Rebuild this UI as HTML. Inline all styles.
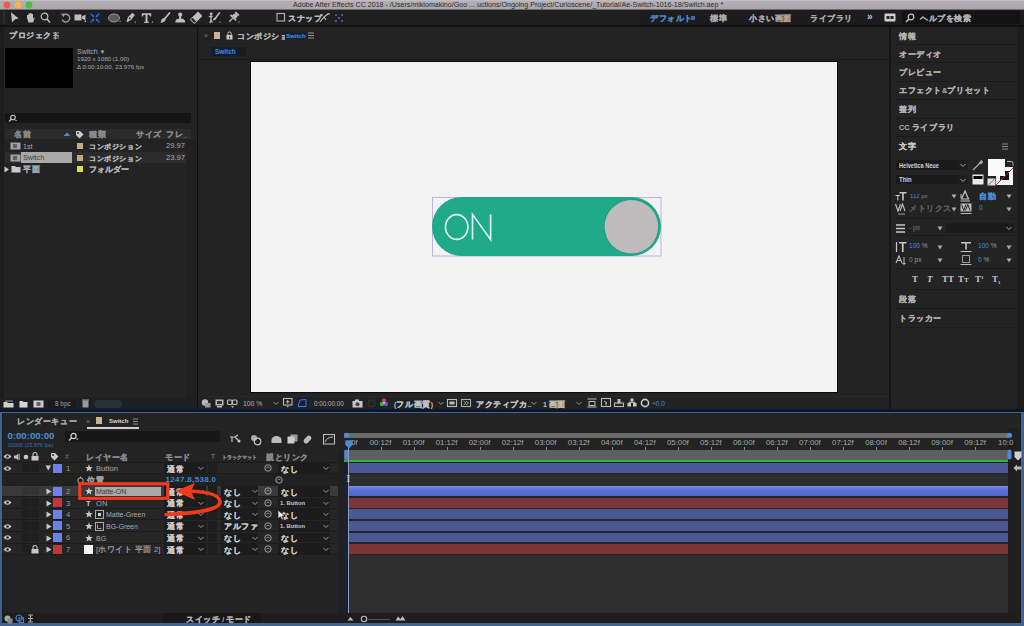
<!DOCTYPE html><html><head><meta charset="utf-8"><style>
html,body{margin:0;padding:0;width:1024px;height:626px;overflow:hidden;background:#101010;}
.a{position:absolute;}
.t{font-family:"Liberation Sans",sans-serif;white-space:nowrap;}
svg{overflow:visible}
</style></head><body>
<div class="a" style="left:0px;top:0px;width:1024px;height:10px;background:linear-gradient(#c9c4c9,#b3aeb3 15%,#aba6ab);"></div>
<div class="a" style="left:0px;top:9.3px;width:1024px;height:0.7px;background:#6d6a6d;"></div>
<svg class="a" style="left:3px;top:1px;" width="8" height="8" viewBox="0 0 8 8"><circle cx="4" cy="4" r="3.4" fill="#ec5b55"/></svg>
<svg class="a" style="left:14px;top:1px;" width="8" height="8" viewBox="0 0 8 8"><circle cx="4" cy="4" r="3.4" fill="#f4b73f"/></svg>
<svg class="a" style="left:25px;top:1px;" width="8" height="8" viewBox="0 0 8 8"><circle cx="4" cy="4" r="3.4" fill="#45c13f"/></svg>
<div class="a t" style="left:293px;top:0.00px;line-height:10px;font-size:7.1px;color:#2f2d30;">Adobe After Effects CC 2018 - /Users/mikiomakino/Goo ... uctions/Ongoing Project/Curioscene/_Tutorial/Ae-Switch-1016-18/Switch.aep *</div>
<div class="a" style="left:0px;top:10px;width:1024px;height:15px;background:#1f1f1f;"></div>
<div class="a" style="left:640px;top:10px;width:384px;height:15px;background:#1c1c1c;"></div>
<div class="a" style="left:0px;top:25px;width:1024px;height:2px;background:#111;"></div>
<div class="a" style="left:3px;top:11px;width:2px;height:13px;background:#2c2c2c;"></div>
<svg class="a" style="left:10px;top:12px;" width="11" height="12" viewBox="0 0 11 12"><path d="M1 0.3 L8.8 6.6 L5.2 7.2 L2 10.6 Z" fill="#bdbdbd"/></svg>
<svg class="a" style="left:25px;top:12px;" width="10" height="12" viewBox="0 0 10 12"><path d="M2 6 L2 3 L3.5 3 L3.5 5 L3.5 1.5 L5 1.5 L5 5 L5 1 L6.5 1 L6.5 5 L6.5 2 L8 2 L8 7 L9 5.5 L9.8 6 L8 10.5 L3.5 10.5 Z" fill="#bdbdbd"/></svg>
<svg class="a" style="left:40px;top:12px;" width="11" height="12" viewBox="0 0 11 12"><circle cx="4.5" cy="4.5" r="3.3" fill="none" stroke="#bdbdbd" stroke-width="1.2"/><path d="M7 7 L10 10.5" stroke="#bdbdbd" stroke-width="1.5"/></svg>
<svg class="a" style="left:60px;top:12px;" width="11" height="12" viewBox="0 0 11 12"><path d="M3.2 3.2 A3.9 3.9 0 1 1 2.2 7.5" fill="none" stroke="#9a9a9a" stroke-width="1.4"/><path d="M0.8 1.8 L4.8 1.6 L3.6 5.2 Z" fill="#9a9a9a"/></svg>
<svg class="a" style="left:74px;top:12px;" width="13" height="12" viewBox="0 0 13 12"><rect x="0.5" y="2.5" width="7" height="6" fill="#bdbdbd"/><path d="M8 4.5 L11.5 2.5 L11.5 8.5 L8 6.5Z" fill="#bdbdbd"/><path d="M10 10 L12 10 L12 8Z" fill="#bdbdbd"/></svg>
<div class="a" style="left:89px;top:12px;width:12px;height:12px;background:#15233d;border-radius:2px;"></div>
<svg class="a" style="left:89px;top:12px;" width="12" height="12" viewBox="0 0 12 12"><path d="M1.5 1.5 L4.5 4.5 M10.5 1.5 L7.5 4.5 M1.5 10.5 L4.5 7.5 M10.5 10.5 L7.5 7.5" stroke="#36609f" stroke-width="1.2"/><path d="M3.8 3 L5 5 L3 3.8Z M8.2 3 L7 5 L9 3.8Z M3.8 9 L5 7 L3 8.2Z M8.2 9 L7 7 L9 8.2Z" fill="#4272b8" stroke="#4272b8" stroke-width="0.8"/></svg>
<svg class="a" style="left:108px;top:12px;" width="13" height="12" viewBox="0 0 13 12"><ellipse cx="6" cy="6" rx="5.5" ry="4" fill="#5a5a5a" stroke="#9a9a9a" stroke-width="1"/><path d="M11 10 L12.5 10 L12.5 8.5Z" fill="#bbb"/></svg>
<svg class="a" style="left:124px;top:12px;" width="12" height="12" viewBox="0 0 12 12"><g transform="rotate(40 6 6)"><path d="M4.2 0.5 H7.8 V3.5 Q9 6.5 6 11.5 Q3 6.5 4.2 3.5 Z" fill="#bdbdbd"/><circle cx="6" cy="6.3" r="0.9" fill="#222"/></g><path d="M10.5 10.5 L12 10.5 L12 9Z" fill="#bbb"/></svg>
<svg class="a" style="left:141px;top:12px;" width="12" height="12" viewBox="0 0 12 12"><path d="M0.8 1.2 H10.2 V4.6 H9.2 Q9 2.8 7.4 2.8 H6.5 V9.8 H7.8 V11 H3.2 V9.8 H4.5 V2.8 H3.6 Q2 2.8 1.8 4.6 H0.8 Z" fill="#bdbdbd"/><path d="M10.5 10.5 L12 10.5 L12 9Z" fill="#bbb"/></svg>
<svg class="a" style="left:159px;top:12px;" width="12" height="12" viewBox="0 0 12 12"><path d="M10.5 1 L6 6.5" stroke="#bdbdbd" stroke-width="1.8" stroke-linecap="round"/><path d="M5.5 5.8 Q2.5 6 1.5 10.8 Q5.8 10.5 6.8 7.3Z" fill="#bdbdbd"/></svg>
<svg class="a" style="left:175px;top:12px;" width="12" height="12" viewBox="0 0 12 12"><circle cx="5.2" cy="2.6" r="2.1" fill="#bdbdbd"/><rect x="4.2" y="4" width="2" height="3" fill="#bdbdbd"/><path d="M0.3 10.5 Q0.3 7.2 3 6.8 H7.4 Q10.2 7.2 10.2 10.5 Z" fill="#bdbdbd"/></svg>
<svg class="a" style="left:190px;top:12px;" width="12" height="12" viewBox="0 0 12 12"><g transform="rotate(45 6 6)"><rect x="2.8" y="0" width="6.4" height="11.5" rx="0.8" fill="#bdbdbd"/><rect x="3.5" y="8.3" width="5" height="2.4" fill="#2a2a2a"/></g></svg>
<svg class="a" style="left:208px;top:12px;" width="13" height="12" viewBox="0 0 13 12"><circle cx="3.2" cy="1.8" r="1.4" fill="#bdbdbd"/><path d="M1 5 L3 3.8 L4.5 5 M3 4 V8 L1.8 11 M3 8 L4.5 10.5" stroke="#bdbdbd" stroke-width="1.3" fill="none"/><path d="M11.5 0.8 L7.8 5.8" stroke="#bdbdbd" stroke-width="1.5" stroke-linecap="round"/><path d="M7.3 5.3 Q5 5.8 5 8.5 Q7.8 8.3 8.5 6.5Z" fill="#bdbdbd"/><path d="M11 10.5 L12.5 10.5 L12.5 9Z" fill="#bbb"/></svg>
<svg class="a" style="left:227px;top:12px;" width="13" height="12" viewBox="0 0 13 12"><g transform="rotate(45 6.5 5.5)"><rect x="4" y="-0.5" width="5" height="1.8" fill="#bdbdbd"/><path d="M4.7 1.3 H8.3 L9.2 5 H3.8Z" fill="#bdbdbd"/><rect x="2.5" y="5" width="8" height="1.6" fill="#bdbdbd"/><path d="M6.5 6.6 V11.5" stroke="#bdbdbd" stroke-width="1.2"/></g><path d="M11 10.5 L12.5 10.5 L12.5 9Z" fill="#bbb"/></svg>
<svg class="a" style="left:276px;top:12px;" width="10" height="11" viewBox="0 0 10 11"><rect x="1" y="1.5" width="7.5" height="7.5" fill="none" stroke="#aaa" stroke-width="1.2"/></svg>
<div class="a t" style="left:288px;top:12.10px;line-height:11.4px;font-size:7.4px;color:#bdbdbd;font-weight:bold;"><span style="font-size:8px;letter-spacing:0.6px;position:relative;top:0.6px;-webkit-text-stroke:0.2px">スナップ</span></div>
<svg class="a" style="left:319px;top:12px;" width="11" height="12" viewBox="0 0 11 12"><path d="M1 10 L5 5 L7 8 M5 5 L9 2" stroke="#bbb" stroke-width="1.2" fill="none"/><path d="M8 1 L10.5 1 L10.5 3.5Z" fill="#bbb"/></svg>
<svg class="a" style="left:334px;top:12px;" width="10" height="12" viewBox="0 0 10 12"><g fill="#4a6fb0"><circle cx="2" cy="3" r="1"/><circle cx="8" cy="3" r="1"/><circle cx="2" cy="9" r="1"/><circle cx="8" cy="9" r="1"/><circle cx="5" cy="6" r="1"/></g></svg>
<div class="a t" style="left:650px;top:12.10px;line-height:11.4px;font-size:7.4px;color:#4f86d0;font-weight:bold;"><span style="font-size:8px;letter-spacing:0.6px;position:relative;top:0.6px;-webkit-text-stroke:0.2px">デフォルト</span></div>
<div class="a" style="left:691px;top:16px;width:4px;height:4px;background:#3f6cb5;"></div>
<div class="a t" style="left:710px;top:12.10px;line-height:11.4px;font-size:7.4px;color:#aaaaaa;font-weight:bold;"><span style="font-size:8px;letter-spacing:0.6px;position:relative;top:0.6px;-webkit-text-stroke:0.2px">標準</span></div>
<div class="a t" style="left:749px;top:12.10px;line-height:11.4px;font-size:7.4px;color:#aaaaaa;font-weight:bold;"><span style="font-size:8px;letter-spacing:0.6px;position:relative;top:0.6px;-webkit-text-stroke:0.2px">小さい画面</span></div>
<div class="a t" style="left:810px;top:12.10px;line-height:11.4px;font-size:7.4px;color:#aaaaaa;font-weight:bold;"><span style="font-size:8px;letter-spacing:0.6px;position:relative;top:0.6px;-webkit-text-stroke:0.2px">ライブラリ</span></div>
<div class="a t" style="left:867px;top:10.00px;line-height:14px;font-size:10px;color:#c8c8c8;font-weight:bold;">»</div>
<svg class="a" style="left:884px;top:13px;" width="12" height="9" viewBox="0 0 12 9"><rect x="0.5" y="0.5" width="11" height="8" rx="1" fill="#cfcfcf"/><rect x="2.5" y="3" width="3" height="3" fill="#222"/><rect x="6.5" y="3" width="3" height="3" fill="#222"/></svg>
<div class="a" style="left:902px;top:11px;width:118px;height:13px;background:#131313;"></div>
<svg class="a" style="left:905px;top:13px;" width="10" height="10" viewBox="0 0 10 10"><circle cx="6" cy="4" r="2.8" fill="none" stroke="#c8c8c8" stroke-width="1.2"/><path d="M4 6 L1 9" stroke="#c8c8c8" stroke-width="1.4"/></svg>
<div class="a t" style="left:920px;top:12.10px;line-height:11.4px;font-size:7.4px;color:#b0b0b0;font-weight:bold;"><span style="font-size:8px;letter-spacing:0.6px;position:relative;top:0.6px;-webkit-text-stroke:0.2px">ヘルプを検索</span></div>
<div class="a" style="left:0px;top:27px;width:197px;height:382px;background:#232323;"></div>
<div class="a" style="left:0px;top:27px;width:4px;height:382px;background:#1c1c1c;"></div>
<div class="a t" style="left:9px;top:29.50px;line-height:11.6px;font-size:7.6px;color:#b9b9b9;font-weight:bold;"><span style="font-size:8px;letter-spacing:0.6px;position:relative;top:0.6px;-webkit-text-stroke:0.2px">プロジェクト</span></div>
<svg class="a" style="left:53px;top:32px;" width="7" height="7" viewBox="0 0 7 7"><path d="M0 1 H6 M0 3.5 H6 M0 6 H6" stroke="#9a9a9a" stroke-width="1"/></svg>
<div class="a" style="left:5px;top:48px;width:68px;height:40px;background:#000;"></div>
<div class="a t" style="left:77px;top:45.80px;line-height:11px;font-size:7px;color:#a9a9a9;">Switch <span style="font-size:6px">▼</span></div>
<div class="a t" style="left:77px;top:54.10px;line-height:10.2px;font-size:6.2px;color:#a9a9a9;">1920 x 1080 (1.00)</div>
<div class="a t" style="left:77px;top:62.10px;line-height:10.2px;font-size:6.2px;color:#a9a9a9;">Δ 0:00:10:00, 23.976 fps</div>
<div class="a" style="left:5px;top:113px;width:186px;height:10px;background:#161616;"></div>
<svg class="a" style="left:8px;top:114px;" width="10" height="9" viewBox="0 0 10 9"><circle cx="5" cy="3.5" r="2.3" fill="none" stroke="#c8c8c8" stroke-width="1.1"/><path d="M3.5 5 L1 7.5" stroke="#c8c8c8" stroke-width="1.3"/><path d="M7 6 L9 6 L8 7.3Z" fill="#c8c8c8"/></svg>
<div class="a" style="left:5px;top:129px;width:186px;height:10px;background:#2b2b2b;"></div>
<div class="a t" style="left:14px;top:128.60px;line-height:11.4px;font-size:7.4px;color:#8a8a8a;font-weight:bold;"><span style="font-size:8px;letter-spacing:0.6px;position:relative;top:0.6px;-webkit-text-stroke:0.2px">名前</span></div>
<svg class="a" style="left:63px;top:131px;" width="8" height="6" viewBox="0 0 8 6"><path d="M0.5 5 L4 1.5 L7.5 5Z" fill="#4d8ad8"/></svg>
<svg class="a" style="left:75px;top:130px;" width="9" height="9" viewBox="0 0 9 9"><path d="M1 1 H5 L8.5 4.5 L4.5 8.5 L1 5Z" fill="#c9c9c9"/><circle cx="3" cy="3" r="0.9" fill="#2b2b2b"/></svg>
<div class="a t" style="left:89px;top:128.60px;line-height:11.4px;font-size:7.4px;color:#8a8a8a;font-weight:bold;"><span style="font-size:8px;letter-spacing:0.6px;position:relative;top:0.6px;-webkit-text-stroke:0.2px">種類</span></div>
<div class="a t" style="left:136px;top:128.60px;line-height:11.4px;font-size:7.4px;color:#8a8a8a;font-weight:bold;"><span style="font-size:8px;letter-spacing:0.6px;position:relative;top:0.6px;-webkit-text-stroke:0.2px">サイズ</span></div>
<div class="a t" style="left:166px;top:128.60px;line-height:11.4px;font-size:7.4px;color:#8a8a8a;font-weight:bold;"><span style="font-size:8px;letter-spacing:0.6px;position:relative;top:0.6px;-webkit-text-stroke:0.2px">フレ</span>_</div>
<div class="a" style="left:5px;top:152px;width:186px;height:11px;background:#2c2c2c;"></div>
<div class="a" style="left:21px;top:152px;width:51px;height:11px;background:#a9a9a9;"></div>
<svg class="a" style="left:10px;top:142px;" width="11" height="8" viewBox="0 0 11 8"><rect x="0.5" y="0.5" width="10" height="7" fill="#9aa4aa"/><rect x="3" y="2" width="4" height="4" fill="#6a5a58"/></svg>
<svg class="a" style="left:10px;top:153.5px;" width="11" height="8" viewBox="0 0 11 8"><rect x="0.5" y="0.5" width="10" height="7" fill="#9aa4aa"/><rect x="3" y="2" width="4" height="4" fill="#6a5a58"/></svg>
<div class="a t" style="left:23px;top:140.60px;line-height:11.2px;font-size:7.2px;color:#a9a9a9;">1st</div>
<div class="a t" style="left:23px;top:152.10px;line-height:11.2px;font-size:7.2px;color:#3d3d3d;">Switch</div>
<svg class="a" style="left:4px;top:166px;" width="6" height="7" viewBox="0 0 6 7"><path d="M0.5 0.5 L5 3.5 L0.5 6.5Z" fill="#c9c9c9"/></svg>
<svg class="a" style="left:11px;top:165px;" width="10" height="8" viewBox="0 0 10 8"><path d="M0.5 1 H4 L5 2 H9.5 V7.5 H0.5Z" fill="#c9c9c9"/></svg>
<div class="a t" style="left:23px;top:163.80px;line-height:11.4px;font-size:7.4px;color:#a9a9a9;font-weight:bold;"><span style="font-size:8px;letter-spacing:0.6px;position:relative;top:0.6px;-webkit-text-stroke:0.2px">平面</span></div>
<div class="a" style="left:77px;top:143px;width:6px;height:6px;background:#c0ac88;"></div>
<div class="a" style="left:77px;top:154.5px;width:6px;height:6px;background:#c0ac88;"></div>
<div class="a" style="left:77px;top:166px;width:6px;height:6px;background:#dede55;"></div>
<div class="a t" style="left:89px;top:140.60px;line-height:11.2px;font-size:7.2px;color:#b5b5b5;font-weight:bold;"><span style="font-size:7px;letter-spacing:0.6px;position:relative;top:0.6px;-webkit-text-stroke:0.2px">コンポジション</span></div>
<div class="a t" style="left:89px;top:152.10px;line-height:11.2px;font-size:7.2px;color:#b5b5b5;font-weight:bold;"><span style="font-size:7px;letter-spacing:0.6px;position:relative;top:0.6px;-webkit-text-stroke:0.2px">コンポジション</span></div>
<div class="a t" style="left:89px;top:163.90px;line-height:11.2px;font-size:7.2px;color:#b5b5b5;font-weight:bold;"><span style="font-size:7.5px;letter-spacing:0px;position:relative;top:0.6px;-webkit-text-stroke:0.2px">フォルダー</span></div>
<div class="a t" style="right:839px;top:140.40px;line-height:11.6px;font-size:7.6px;color:#a9a9a9;">29.97</div>
<div class="a t" style="right:839px;top:151.90px;line-height:11.6px;font-size:7.6px;color:#a9a9a9;">23.97</div>
<svg class="a" style="left:186px;top:142px;" width="9" height="8" viewBox="0 0 9 8"><rect x="3" y="0.5" width="3" height="3" fill="#c9c9c9"/><rect x="0" y="4.5" width="3.5" height="3" fill="#c9c9c9"/><rect x="5.5" y="4.5" width="3.5" height="3" fill="#c9c9c9"/></svg>
<div class="a" style="left:186px;top:140px;width:10px;height:258px;background:#202020;"></div>
<div class="a" style="left:0px;top:398px;width:197px;height:11px;background:#1d1f22;"></div>
<div class="a" style="left:0px;top:403px;width:197px;height:6px;background:#1a2028;"></div>
<svg class="a" style="left:3px;top:400px;" width="11" height="8" viewBox="0 0 11 8"><path d="M0.5 2 H4 L5 3 H10.5 V7.5 H0.5Z" fill="#cfcfcf"/><rect x="2" y="0.5" width="8" height="1.2" fill="#888"/></svg>
<svg class="a" style="left:19px;top:400px;" width="9" height="8" viewBox="0 0 9 8"><path d="M0.5 1 H3.5 L4.5 2 H8.5 V7.5 H0.5Z" fill="#d5d5d5"/></svg>
<svg class="a" style="left:33px;top:400px;" width="11" height="8" viewBox="0 0 11 8"><rect x="0.5" y="0.5" width="10" height="7" fill="#d0cfd0"/><rect x="3.5" y="2" width="4" height="4" fill="#6a5a60"/></svg>
<div class="a" style="left:48px;top:400px;width:28px;height:8px;background:#1a1a1a;"></div>
<div class="a t" style="left:55px;top:398.80px;line-height:10.4px;font-size:6.4px;color:#a0a0a0;">8 bpc</div>
<svg class="a" style="left:82px;top:399px;" width="7" height="9" viewBox="0 0 7 9"><rect x="0.5" y="1.5" width="6" height="7" fill="#9a9a9a"/><rect x="0" y="0.5" width="7" height="1" fill="#9a9a9a"/></svg>
<div class="a" style="left:94px;top:400px;width:28px;height:8px;background:#283038;border-radius:4px;"></div>
<div class="a" style="left:198px;top:27px;width:691px;height:382px;background:#232323;"></div>
<div class="a t" style="left:204px;top:30.00px;line-height:11px;font-size:7px;color:#777;">×</div>
<div class="a" style="left:214px;top:32px;width:6px;height:7px;background:#c7b48f;"></div>
<svg class="a" style="left:226px;top:31px;" width="7" height="9" viewBox="0 0 7 9"><path d="M1.8 4 V2.6 A1.7 1.7 0 0 1 5.2 2.6 V4" fill="none" stroke="#c8c8c8" stroke-width="1"/><rect x="0.5" y="4" width="6" height="4.5" fill="#c8c8c8"/><rect x="3" y="5.5" width="1" height="2" fill="#333"/></svg>
<div class="a t" style="left:237px;top:30.20px;line-height:11px;font-size:7px;color:#b5b5b5;font-weight:bold;"><span style="font-size:8px;letter-spacing:0.6px;position:relative;top:0.6px;-webkit-text-stroke:0.2px">コンポジション</span></div>
<div class="a" style="left:285px;top:31.5px;width:20px;height:8px;background:#172232;"></div>
<div class="a t" style="left:286px;top:30.65px;line-height:10.1px;font-size:6.1px;color:#4f90dc;font-weight:bold;">Switch</div>
<svg class="a" style="left:308px;top:32px;" width="7" height="7" viewBox="0 0 7 7"><path d="M0 1 H6 M0 3.5 H6 M0 6 H6" stroke="#9a9a9a" stroke-width="1"/></svg>
<div class="a" style="left:211px;top:47px;width:35px;height:9px;background:#1a1a1a;"></div>
<div class="a" style="left:211px;top:47px;width:26px;height:9px;background:#0f1d33;"></div>
<div class="a t" style="left:215px;top:46.50px;line-height:10.4px;font-size:6.4px;color:#4d88d0;font-weight:bold;">Switch</div>
<div class="a" style="left:198px;top:59px;width:691px;height:1px;background:#1b1b1b;"></div>
<div class="a" style="left:250px;top:61px;width:588px;height:332px;background:#0c0c0c;"></div>
<div class="a" style="left:251px;top:62px;width:586px;height:330px;background:#f3f3f3;"></div>
<svg class="a" style="left:430px;top:195px;" width="234" height="64" viewBox="0 0 234 64">
<rect x="2.5" y="2.5" width="228.5" height="58.5" fill="none" stroke="#b7b0dc" stroke-width="0.9"/>
<rect x="2" y="2" width="229" height="59" rx="29.5" fill="#21aa8a"/>
<circle cx="201.4" cy="31.8" r="27.8" fill="#1e9c7e"/>
<circle cx="201.4" cy="31.8" r="26.8" fill="#bdbbbc"/>
<ellipse cx="26.7" cy="32" rx="11.2" ry="12.4" fill="none" stroke="#e4fbf3" stroke-width="1.6"/>
<path d="M42.5 44.6 V19.4 L60.6 44.6 V19.4" fill="none" stroke="#e4fbf3" stroke-width="1.6"/>
</svg>
<div class="a" style="left:198px;top:396px;width:691px;height:1px;background:#2a2a2a;"></div>
<div class="a" style="left:198px;top:397px;width:691px;height:12px;background:#222222;"></div>
<div class="a" style="left:198px;top:403px;width:691px;height:6px;background:#1f2328;"></div>
<svg class="a" style="left:201px;top:399px;" width="10" height="9" viewBox="0 0 10 9"><circle cx="4" cy="3.5" r="3.2" fill="#bbb"/><rect x="4" y="4" width="5.5" height="4.5" fill="#9a9a9a"/></svg>
<svg class="a" style="left:215px;top:399px;" width="9" height="9" viewBox="0 0 9 9"><rect x="0.5" y="0.5" width="8" height="6" fill="#bbb"/><rect x="2" y="2" width="5" height="3" fill="#333"/><rect x="2" y="7" width="5" height="1.5" fill="#bbb"/></svg>
<svg class="a" style="left:227px;top:399px;" width="11" height="10" viewBox="0 0 11 10"><rect x="0.5" y="1" width="4.5" height="4.5" rx="1" fill="none" stroke="#bbb" stroke-width="1.2"/><rect x="5.5" y="1" width="4.5" height="4.5" rx="1" fill="none" stroke="#bbb" stroke-width="1.2"/><path d="M4 7 L7 7 L5.5 9Z" fill="#bbb"/></svg>
<div class="a t" style="left:243px;top:398.90px;line-height:10.8px;font-size:6.8px;color:#b0b0b0;">100 %</div>
<svg class="a" style="left:273px;top:401px;" width="6" height="5" viewBox="0 0 6 5"><path d="M0.5 1 L3 3.5 L5.5 1" fill="none" stroke="#999" stroke-width="1"/></svg>
<svg class="a" style="left:283px;top:398px;" width="10" height="10" viewBox="0 0 10 10"><rect x="0.5" y="0.5" width="8.5" height="6.5" fill="none" stroke="#bbb" stroke-width="1.1"/><path d="M4.7 2 V5.5 M3 3.8 H6.5" stroke="#bbb"/><path d="M3.5 8 L6 8 L4.7 9.5Z" fill="#bbb"/></svg>
<div class="a" style="left:296px;top:398px;width:12px;height:10px;background:#13213a;"></div>
<svg class="a" style="left:296px;top:398px;" width="12" height="10" viewBox="0 0 12 10"><path d="M2 8.5 L4 2 L10 1.5 L10 8.5Z" fill="none" stroke="#4a78c8" stroke-width="1"/></svg>
<div class="a t" style="left:314px;top:399.15px;line-height:10.3px;font-size:6.3px;color:#b5b5b5;">0:00:00:00</div>
<svg class="a" style="left:352px;top:399px;" width="11" height="9" viewBox="0 0 11 9"><rect x="0.5" y="2" width="10" height="6.5" fill="#c5c5c5"/><rect x="3" y="0.5" width="4" height="2" fill="#c5c5c5"/><circle cx="5.5" cy="5.2" r="2" fill="#444"/></svg>
<svg class="a" style="left:367px;top:399px;" width="9" height="9" viewBox="0 0 9 9"><circle cx="4.5" cy="4.5" r="3.5" fill="none" stroke="#3a3a3a" stroke-width="1"/></svg>
<svg class="a" style="left:379px;top:398px;" width="10" height="10" viewBox="0 0 10 10"><circle cx="5" cy="2.8" r="2.2" fill="#e04040"/><circle cx="3" cy="6" r="2.2" fill="#30b040"/><circle cx="7" cy="6" r="2.2" fill="#4060e0"/><circle cx="5" cy="5" r="1.3" fill="#b0a0ff"/></svg>
<div class="a t" style="left:394px;top:398.80px;line-height:11px;font-size:7px;color:#c0c0c0;font-weight:bold;">(<span style="font-size:8px;letter-spacing:0.6px;position:relative;top:0.6px;-webkit-text-stroke:0.2px">フル画質</span>)</div>
<svg class="a" style="left:438px;top:401px;" width="6" height="5" viewBox="0 0 6 5"><path d="M0.5 1 L3 3.5 L5.5 1" fill="none" stroke="#999" stroke-width="1"/></svg>
<svg class="a" style="left:447px;top:399px;" width="10" height="8" viewBox="0 0 10 8"><rect x="0.5" y="0.5" width="9" height="7" fill="none" stroke="#bbb" stroke-width="1.1"/><rect x="2.5" y="2.5" width="5" height="3" fill="#bbb"/></svg>
<svg class="a" style="left:461px;top:399px;" width="10" height="8" viewBox="0 0 10 8"><rect x="0.5" y="0.5" width="9" height="7" fill="none" stroke="#aaa" stroke-width="1.1"/><path d="M2.5 2 L5 4 L2.5 6 M5 2 L7.5 4 L5 6" fill="none" stroke="#aaa" stroke-width="0.9"/></svg>
<div class="a t" style="left:476px;top:398.80px;line-height:11px;font-size:7px;color:#c0c0c0;font-weight:bold;"><span style="font-size:8px;letter-spacing:0.6px;position:relative;top:0.6px;-webkit-text-stroke:0.2px">アクティブカ</span>..</div>
<svg class="a" style="left:531px;top:401px;" width="6" height="5" viewBox="0 0 6 5"><path d="M0.5 1 L3 3.5 L5.5 1" fill="none" stroke="#999" stroke-width="1"/></svg>
<div class="a t" style="left:543px;top:398.80px;line-height:11px;font-size:7px;color:#c0c0c0;font-weight:bold;">1 <span style="font-size:8px;letter-spacing:0.6px;position:relative;top:0.6px;-webkit-text-stroke:0.2px">画面</span></div>
<svg class="a" style="left:576px;top:401px;" width="6" height="5" viewBox="0 0 6 5"><path d="M0.5 1 L3 3.5 L5.5 1" fill="none" stroke="#999" stroke-width="1"/></svg>
<svg class="a" style="left:587px;top:398px;" width="10" height="10" viewBox="0 0 10 10"><path d="M0.5 1 H9.5 M0.5 9 H9.5" stroke="#bbb"/><rect x="2" y="3.5" width="6" height="4" fill="none" stroke="#bbb"/></svg>
<svg class="a" style="left:601px;top:398px;" width="10" height="10" viewBox="0 0 10 10"><rect x="0.5" y="0.5" width="9" height="8" fill="none" stroke="#bbb" stroke-width="1.1"/><path d="M3 3 L6 5 L4.5 5.5 L5.5 7.5" stroke="#bbb" fill="none"/></svg>
<svg class="a" style="left:614px;top:398px;" width="10" height="10" viewBox="0 0 10 10"><rect x="0.5" y="5" width="9" height="3.5" fill="none" stroke="#bbb" stroke-width="1.1"/><rect x="3.5" y="1" width="3" height="4.5" fill="#bbb"/></svg>
<svg class="a" style="left:627px;top:398px;" width="10" height="10" viewBox="0 0 10 10"><rect x="3.5" y="0.5" width="3" height="3" fill="#c8c8c8"/><rect x="0.5" y="5" width="3.5" height="3.5" fill="#c8c8c8"/><rect x="6" y="5" width="3.5" height="3.5" fill="#c8c8c8"/><path d="M5 3.5 V5 M2 5 V4.3 H8 V5" stroke="#c8c8c8"/></svg>
<svg class="a" style="left:640px;top:398px;" width="10" height="10" viewBox="0 0 10 10"><circle cx="5" cy="5" r="3.6" fill="none" stroke="#c8c8c8" stroke-width="1.6"/></svg>
<div class="a t" style="left:652px;top:399.00px;line-height:10.6px;font-size:6.6px;color:#4a88d0;">+0.0</div>
<div class="a" style="left:889px;top:27px;width:2px;height:382px;background:#151515;"></div>
<div class="a" style="left:891px;top:27px;width:133px;height:382px;background:#232323;"></div>
<div class="a" style="left:1017px;top:27px;width:7px;height:382px;background:#1c1c1c;"></div>
<div class="a t" style="left:899px;top:30.30px;line-height:11.4px;font-size:7.4px;color:#b0b0b0;font-weight:bold;"><span style="font-size:8px;letter-spacing:0.6px;position:relative;top:0.6px;-webkit-text-stroke:0.2px">情報</span></div>
<div class="a" style="left:894px;top:44px;width:123px;height:1px;background:#1a1a1a;"></div>
<div class="a t" style="left:899px;top:48.30px;line-height:11.4px;font-size:7.4px;color:#b0b0b0;font-weight:bold;"><span style="font-size:8px;letter-spacing:0.6px;position:relative;top:0.6px;-webkit-text-stroke:0.2px">オーディオ</span></div>
<div class="a" style="left:894px;top:62.3px;width:123px;height:1px;background:#1a1a1a;"></div>
<div class="a t" style="left:899px;top:66.60px;line-height:11.4px;font-size:7.4px;color:#b0b0b0;font-weight:bold;"><span style="font-size:8px;letter-spacing:0.6px;position:relative;top:0.6px;-webkit-text-stroke:0.2px">プレビュー</span></div>
<div class="a" style="left:894px;top:80.5px;width:123px;height:1px;background:#1a1a1a;"></div>
<div class="a t" style="left:899px;top:84.80px;line-height:11.4px;font-size:7.4px;color:#b0b0b0;font-weight:bold;"><span style="font-size:8px;letter-spacing:0.6px;position:relative;top:0.6px;-webkit-text-stroke:0.2px">エフェクト</span>&<span style="font-size:8px;letter-spacing:0.6px;position:relative;top:0.6px;-webkit-text-stroke:0.2px">プリセット</span></div>
<div class="a" style="left:894px;top:99px;width:123px;height:1px;background:#1a1a1a;"></div>
<div class="a t" style="left:899px;top:103.30px;line-height:11.4px;font-size:7.4px;color:#b0b0b0;font-weight:bold;"><span style="font-size:8px;letter-spacing:0.6px;position:relative;top:0.6px;-webkit-text-stroke:0.2px">整列</span></div>
<div class="a" style="left:894px;top:117.6px;width:123px;height:1px;background:#1a1a1a;"></div>
<div class="a t" style="left:899px;top:121.50px;line-height:11.4px;font-size:7.4px;color:#b0b0b0;font-weight:bold;">CC <span style="font-size:8px;letter-spacing:0.6px;position:relative;top:0.6px;-webkit-text-stroke:0.2px">ライブラリ</span></div>
<div class="a" style="left:894px;top:135.8px;width:123px;height:1px;background:#1a1a1a;"></div>
<div class="a t" style="left:899px;top:140.20px;line-height:11.4px;font-size:7.4px;color:#c5c5c5;font-weight:bold;"><span style="font-size:8px;letter-spacing:0.6px;position:relative;top:0.6px;-webkit-text-stroke:0.2px">文字</span></div>
<svg class="a" style="left:1002px;top:143px;" width="7" height="7" viewBox="0 0 7 7"><path d="M0 1 H6 M0 3.5 H6 M0 6 H6" stroke="#8a8a8a" stroke-width="1"/></svg>
<div class="a" style="left:896px;top:160px;width:62px;height:10px;background:#1a1a1a;"></div>
<div class="a" style="left:958px;top:160px;width:10px;height:10px;background:#1d1d1d;"></div>
<div class="a t" style="left:899px;top:159.50px;line-height:11.0px;font-size:7.0px;color:#d0d0d0;font-weight:bold;transform:scaleX(0.8);transform-origin:0 0;">Helvetica Neue</div>
<svg class="a" style="left:960px;top:163px;" width="6" height="5" viewBox="0 0 6 5"><path d="M0.5 1 L3 3.5 L5.5 1" fill="none" stroke="#aaa" stroke-width="1"/></svg>
<div class="a" style="left:896px;top:175px;width:62px;height:9px;background:#1a1a1a;"></div>
<div class="a" style="left:958px;top:175px;width:10px;height:9px;background:#1d1d1d;"></div>
<div class="a t" style="left:899px;top:174.20px;line-height:11.0px;font-size:7.0px;color:#d0d0d0;font-weight:bold;transform:scaleX(0.85);transform-origin:0 0;">Thin</div>
<svg class="a" style="left:960px;top:177.5px;" width="6" height="5" viewBox="0 0 6 5"><path d="M0.5 1 L3 3.5 L5.5 1" fill="none" stroke="#aaa" stroke-width="1"/></svg>
<svg class="a" style="left:972px;top:159px;" width="12" height="12" viewBox="0 0 12 12"><path d="M1 11 L8 4 M9 1.5 L10.5 3" stroke="#aaa" stroke-width="1.3"/><rect x="7.5" y="2" width="3" height="3" transform="rotate(45 9 3.5)" fill="#aaa"/></svg>
<svg class="a" style="left:972px;top:174px;" width="12" height="12" viewBox="0 0 12 12"><rect x="0.5" y="0.5" width="11" height="10" fill="#e8e8e8"/><rect x="1.5" y="2" width="9" height="3" fill="#000"/></svg>
<div class="a" style="left:988px;top:159px;width:17px;height:17px;background:#fafafa;"></div>
<svg class="a" style="left:995px;top:166px;" width="19" height="20" viewBox="0 0 19 20"><rect x="1" y="1" width="17" height="18" fill="#f5f5f5"/><rect x="5" y="5" width="9" height="9" fill="#111"/><path d="M1 19 L18 2" stroke="#c03030" stroke-width="1"/></svg>
<div class="a" style="left:988px;top:159px;width:17px;height:17px;background:#fafafa;"></div>
<svg class="a" style="left:987px;top:178px;" width="9" height="8" viewBox="0 0 9 8"><rect x="0.5" y="0.5" width="8" height="7" fill="#e0e0e0"/><path d="M1 7.5 L8 0.5" stroke="#a33" stroke-width="0.8"/></svg>
<svg class="a" style="left:1006px;top:159px;" width="8" height="7" viewBox="0 0 8 7"><path d="M1 2.5 H5 A2 2 0 0 1 7 4.5 V6.5" fill="none" stroke="#bbb" stroke-width="1"/></svg>
<svg class="a" style="left:895px;top:191px;" width="12" height="10" viewBox="0 0 12 10"><path d="M4.5 1 H11.5 V2.5 H8.8 V9.5 H7.2 V2.5 H4.5Z M0.5 4 H5 V5 H3.3 V9.5 H2.3 V5 H0.5Z" fill="#c8c8c8"/></svg>
<div class="a t" style="left:910px;top:191.00px;line-height:10.0px;font-size:6.0px;color:#4a8ad8;">112 <span style="color:#888">px</span></div>
<svg class="a" style="left:951px;top:194px;" width="6" height="5" viewBox="0 0 6 5"><path d="M0.5 0.5 H5.5 L3 4.5Z" fill="#aaa"/></svg>
<svg class="a" style="left:960px;top:190px;" width="11" height="12" viewBox="0 0 11 12"><path d="M5 1 L8.5 9 H1.5Z" fill="none" stroke="#c8c8c8" stroke-width="1.2"/><path d="M0.5 11 H10" stroke="#c8c8c8"/><path d="M1 4 V8" stroke="#c8c8c8"/></svg>
<div class="a t" style="left:979px;top:190.50px;line-height:11px;font-size:7px;color:#4a8ad8;font-weight:bold;"><span style="font-size:8px;letter-spacing:0.6px;position:relative;top:0.6px;-webkit-text-stroke:0.2px">自動</span></div>
<svg class="a" style="left:1006px;top:194px;" width="6" height="5" viewBox="0 0 6 5"><path d="M0.5 0.5 H5.5 L3 4.5Z" fill="#aaa"/></svg>
<svg class="a" style="left:895px;top:202.5px;" width="12" height="12" viewBox="0 0 12 12"><path d="M0.5 1 L3 8 L5.5 1 M5 8 L7.5 1 L10 8" fill="none" stroke="#bbb" stroke-width="1.2"/><path d="M3 11 H10" stroke="#999"/></svg>
<div class="a t" style="left:909px;top:203.10px;line-height:10.8px;font-size:6.8px;color:#5a5a5a;font-weight:bold;"><span style="font-size:8px;letter-spacing:0.6px;position:relative;top:0.6px;-webkit-text-stroke:0.2px">メトリクス</span></div>
<svg class="a" style="left:951px;top:206.5px;" width="6" height="5" viewBox="0 0 6 5"><path d="M0.5 0.5 H5.5 L3 4.5Z" fill="#aaa"/></svg>
<svg class="a" style="left:960px;top:203px;" width="12" height="12" viewBox="0 0 12 12"><rect x="0.5" y="0.5" width="11" height="8" fill="#bbb"/><path d="M1.5 1.5 L3.7 7.5 L6 1.5 M5.5 7.5 L7.8 1.5 L10 7.5" fill="none" stroke="#222" stroke-width="1"/><path d="M0.5 10.5 H11.5" stroke="#bbb"/></svg>
<div class="a t" style="left:979px;top:203.20px;line-height:10.6px;font-size:6.6px;color:#4a8ad8;">0</div>
<svg class="a" style="left:1006px;top:206.5px;" width="6" height="5" viewBox="0 0 6 5"><path d="M0.5 0.5 H5.5 L3 4.5Z" fill="#aaa"/></svg>
<div class="a" style="left:894px;top:218px;width:123px;height:1px;background:#1b1b1b;"></div>
<svg class="a" style="left:896px;top:224px;" width="10" height="9" viewBox="0 0 10 9"><path d="M0 1 H9 M0 4.5 H9 M0 8 H9" stroke="#c8c8c8" stroke-width="1.4"/></svg>
<div class="a t" style="left:909px;top:222.70px;line-height:10.6px;font-size:6.6px;color:#777;">- px</div>
<svg class="a" style="left:937px;top:226px;" width="6" height="5" viewBox="0 0 6 5"><path d="M0.5 0.5 H5.5 L3 4.5Z" fill="#aaa"/></svg>
<div class="a" style="left:946px;top:223px;width:68px;height:10px;background:#1a1a1a;"></div>
<svg class="a" style="left:1006px;top:226px;" width="6" height="5" viewBox="0 0 6 5"><path d="M0.5 1 L3 3.5 L5.5 1" fill="none" stroke="#aaa" stroke-width="1"/></svg>
<div class="a" style="left:894px;top:235px;width:123px;height:1px;background:#1b1b1b;"></div>
<svg class="a" style="left:895px;top:240.5px;" width="12" height="12" viewBox="0 0 12 12"><path d="M4 1 H11.5 V2.5 H8.6 V11 H6.9 V2.5 H4Z" fill="#c8c8c8"/><path d="M1.5 1 V11" stroke="#c8c8c8" stroke-width="1.2"/></svg>
<div class="a t" style="left:909px;top:241.20px;line-height:10.6px;font-size:6.6px;color:#4a8ad8;">100 <span style="color:#999">%</span></div>
<svg class="a" style="left:937px;top:244.5px;" width="6" height="5" viewBox="0 0 6 5"><path d="M0.5 0.5 H5.5 L3 4.5Z" fill="#aaa"/></svg>
<svg class="a" style="left:960px;top:240.5px;" width="12" height="12" viewBox="0 0 12 12"><path d="M1 1 H11 V2.5 H6.8 V8.5 H5.2 V2.5 H1Z" fill="#c8c8c8"/><path d="M0.5 10.5 H11.5" stroke="#c8c8c8" stroke-width="1"/></svg>
<div class="a t" style="left:978px;top:241.20px;line-height:10.6px;font-size:6.6px;color:#4a8ad8;">100 <span style="color:#999">%</span></div>
<svg class="a" style="left:1006px;top:244.5px;" width="6" height="5" viewBox="0 0 6 5"><path d="M0.5 0.5 H5.5 L3 4.5Z" fill="#aaa"/></svg>
<svg class="a" style="left:895px;top:254px;" width="12" height="12" viewBox="0 0 12 12"><path d="M1 9 L4 2 L7 9 M2.3 6.5 H5.7" fill="none" stroke="#bbb" stroke-width="1.1"/><path d="M9 3 V11 M7.5 9.5 H10.5" stroke="#bbb"/></svg>
<div class="a t" style="left:909px;top:254.70px;line-height:10.6px;font-size:6.6px;color:#4a8ad8;">0 <span style="color:#999">px</span></div>
<svg class="a" style="left:937px;top:258px;" width="6" height="5" viewBox="0 0 6 5"><path d="M0.5 0.5 H5.5 L3 4.5Z" fill="#aaa"/></svg>
<svg class="a" style="left:960px;top:254px;" width="12" height="12" viewBox="0 0 12 12"><rect x="2.5" y="1.5" width="7" height="7" fill="none" stroke="#999" stroke-width="1"/><path d="M0.5 10.5 H11.5" stroke="#bbb"/></svg>
<div class="a t" style="left:978px;top:254.70px;line-height:10.6px;font-size:6.6px;color:#4a8ad8;">0 <span style="color:#999">%</span></div>
<svg class="a" style="left:1006px;top:258px;" width="6" height="5" viewBox="0 0 6 5"><path d="M0.5 0.5 H5.5 L3 4.5Z" fill="#aaa"/></svg>
<div class="a" style="left:894px;top:268px;width:123px;height:1px;background:#1b1b1b;"></div>
<div class="a t" style="left:912px;top:272.50px;line-height:13px;font-size:9px;color:#c8c8c8;font-weight:bold;font-family:'Liberation Serif',serif;">T</div>
<div class="a t" style="left:927px;top:272.50px;line-height:13px;font-size:9px;color:#c8c8c8;font-weight:bold;font-family:'Liberation Serif',serif;"><i>T</i></div>
<div class="a t" style="left:942px;top:272.50px;line-height:13px;font-size:9px;color:#c8c8c8;font-weight:bold;font-family:'Liberation Serif',serif;">TT</div>
<div class="a t" style="left:958px;top:272.50px;line-height:13px;font-size:9px;color:#c8c8c8;font-weight:bold;font-family:'Liberation Serif',serif;">T<span style="font-size:7px">T</span></div>
<div class="a t" style="left:975px;top:272.50px;line-height:13px;font-size:9px;color:#c8c8c8;font-weight:bold;font-family:'Liberation Serif',serif;">T<span style="font-size:5px;position:relative;top:-3px">1</span></div>
<div class="a t" style="left:992px;top:272.50px;line-height:13px;font-size:9px;color:#c8c8c8;font-weight:bold;font-family:'Liberation Serif',serif;">T<span style="font-size:5px;position:relative;top:2px">1</span></div>
<div class="a" style="left:894px;top:289px;width:123px;height:1px;background:#1b1b1b;"></div>
<div class="a t" style="left:899px;top:293.60px;line-height:11.4px;font-size:7.4px;color:#b0b0b0;font-weight:bold;"><span style="font-size:8px;letter-spacing:0.6px;position:relative;top:0.6px;-webkit-text-stroke:0.2px">段落</span></div>
<div class="a" style="left:894px;top:308px;width:123px;height:1px;background:#1b1b1b;"></div>
<div class="a t" style="left:899px;top:312.30px;line-height:11.4px;font-size:7.4px;color:#b0b0b0;font-weight:bold;"><span style="font-size:8px;letter-spacing:0.6px;position:relative;top:0.6px;-webkit-text-stroke:0.2px">トラッカー</span></div>
<div class="a" style="left:894px;top:327px;width:123px;height:1px;background:#1b1b1b;"></div>
<div class="a" style="left:0px;top:409px;width:1024px;height:3px;background:#0b1626;"></div>
<div class="a" style="left:0px;top:412px;width:1024px;height:214px;background:#44628f;"></div>
<div class="a" style="left:2px;top:413px;width:1019px;height:210px;background:#161b24;"></div>
<div class="a" style="left:3px;top:413px;width:1017px;height:209px;background:#232323;"></div>
<div class="a t" style="left:17px;top:415.30px;line-height:11.4px;font-size:7.4px;color:#a8a8a8;font-weight:bold;"><span style="font-size:8px;letter-spacing:0.6px;position:relative;top:0.6px;-webkit-text-stroke:0.2px">レンダーキュー</span></div>
<div class="a t" style="left:86px;top:415.50px;line-height:11px;font-size:7px;color:#777;">×</div>
<div class="a" style="left:96px;top:417px;width:6px;height:7px;background:#c7b48f;"></div>
<div class="a t" style="left:109px;top:416.00px;line-height:10.0px;font-size:6.0px;color:#d8d8d8;font-weight:bold;">Switch</div>
<svg class="a" style="left:133px;top:418px;" width="6" height="7" viewBox="0 0 6 7"><path d="M0 1 H5 M0 3.5 H5 M0 6 H5" stroke="#8a8a8a" stroke-width="1"/></svg>
<div class="a" style="left:87px;top:427px;width:52px;height:1.5px;background:#cfcfcf;"></div>
<div class="a t" style="left:7.5px;top:429.20px;line-height:13.6px;font-size:9.6px;color:#4d8fdd;font-weight:bold;">0:00:00:00</div>
<div class="a t" style="left:8px;top:440.50px;line-height:9.4px;font-size:5.4px;color:#3a6eb0;">00000 (23.976 fps)</div>
<div class="a" style="left:65px;top:431px;width:155px;height:11px;background:#171717;"></div>
<svg class="a" style="left:68px;top:432px;" width="11" height="9" viewBox="0 0 11 9"><circle cx="5.5" cy="4" r="2.6" fill="none" stroke="#d0d0d0" stroke-width="1.2"/><path d="M3.5 6 L1 8.5" stroke="#d0d0d0" stroke-width="1.4"/><path d="M8 6.5 L10.5 6.5 L9.2 8Z" fill="#d0d0d0"/></svg>
<svg class="a" style="left:229px;top:434px;" width="12" height="10" viewBox="0 0 12 10"><path d="M1 3 H6 L9 1 M6 3 L9 6 M3 3 V8" stroke="#ccc" stroke-width="1.1" fill="none"/><circle cx="10" cy="7" r="1.5" fill="#ccc"/></svg>
<svg class="a" style="left:250px;top:434px;" width="12" height="11" viewBox="0 0 12 11"><circle cx="4" cy="4" r="3" fill="#aaa"/><circle cx="7.5" cy="7.5" r="3.3" fill="none" stroke="#ccc" stroke-width="1.2"/></svg>
<svg class="a" style="left:271px;top:435px;" width="11" height="9" viewBox="0 0 11 9"><path d="M0.5 8 V5 A5 4 0 0 1 10.5 5 V8Z" fill="#bbb"/></svg>
<svg class="a" style="left:287px;top:434px;" width="11" height="10" viewBox="0 0 11 10"><rect x="3.5" y="0.5" width="7" height="7" fill="#999"/><rect x="0.5" y="2.5" width="7" height="7" fill="#ccc"/></svg>
<svg class="a" style="left:302px;top:434px;" width="11" height="11" viewBox="0 0 11 11"><rect x="1" y="3" width="9" height="5" rx="2.5" transform="rotate(-45 5.5 5.5)" fill="#bbb"/></svg>
<svg class="a" style="left:323px;top:434px;" width="12" height="11" viewBox="0 0 12 11"><rect x="0.5" y="0.5" width="11" height="9.5" fill="none" stroke="#bbb" stroke-width="1.1"/><path d="M2 8 Q4 3 10 3" stroke="#bbb" fill="none"/></svg>
<div class="a" style="left:2px;top:451px;width:342px;height:11px;background:#232323;"></div>
<div class="a" style="left:2px;top:462px;width:342px;height:1px;background:#1a1a1a;"></div>
<svg class="a" style="left:3px;top:453px;" width="9" height="7" viewBox="0 0 9 7"><path d="M0.5 3.5 Q4.5 -1 8.5 3.5 Q4.5 8 0.5 3.5Z" fill="#c8c8c8"/><circle cx="4.5" cy="3.5" r="1.3" fill="#222"/></svg>
<svg class="a" style="left:13px;top:453px;" width="8" height="8" viewBox="0 0 8 8"><path d="M1 2.5 H3 L5.5 0.5 V7.5 L3 5.5 H1Z" fill="#bbb"/><path d="M6.5 1 V7" stroke="#888"/></svg>
<svg class="a" style="left:23px;top:454px;" width="6" height="6" viewBox="0 0 6 6"><circle cx="3" cy="3" r="2.3" fill="#c8c8c8"/></svg>
<svg class="a" style="left:31px;top:452px;" width="8" height="9" viewBox="0 0 8 9"><path d="M2 4 V2.5 A2 2 0 0 1 6 2.5 V4" fill="none" stroke="#c8c8c8" stroke-width="1.1"/><rect x="0.5" y="4" width="7" height="4.5" fill="#c8c8c8"/></svg>
<svg class="a" style="left:50px;top:452px;" width="9" height="9" viewBox="0 0 9 9"><path d="M1 1 H5 L8.5 4.5 L4.5 8.5 L1 5Z" fill="#c9c9c9"/><circle cx="3" cy="3" r="0.9" fill="#222"/></svg>
<div class="a t" style="left:65px;top:451.50px;line-height:10.6px;font-size:6.6px;color:#6a6a6a;font-style:italic;">#</div>
<div class="a t" style="left:86px;top:451.10px;line-height:11.4px;font-size:7.4px;color:#8a8a8a;font-weight:bold;"><span style="font-size:8px;letter-spacing:0.6px;position:relative;top:0.6px;-webkit-text-stroke:0.2px">レイヤー名</span></div>
<div class="a t" style="left:165px;top:451.10px;line-height:11.4px;font-size:7.4px;color:#8a8a8a;font-weight:bold;"><span style="font-size:8px;letter-spacing:0.6px;position:relative;top:0.6px;-webkit-text-stroke:0.2px">モード</span></div>
<div class="a t" style="left:211px;top:451.50px;line-height:10.6px;font-size:6.6px;color:#888;">T</div>
<div class="a t" style="left:222px;top:452.00px;line-height:9.6px;font-size:5.6px;color:#8a8a8a;font-weight:bold;"><span style="font-size:4.6px;letter-spacing:0px;position:relative;top:0.6px;-webkit-text-stroke:0.2px">トラックマット</span></div>
<div class="a t" style="left:266px;top:451.10px;line-height:11.4px;font-size:7.4px;color:#8a8a8a;font-weight:bold;"><span style="font-size:8px;letter-spacing:0.6px;position:relative;top:0.6px;-webkit-text-stroke:0.2px">親とリンク</span></div>
<div class="a" style="left:2px;top:462.6px;width:342px;height:10.57px;background:#252525;"></div>
<div class="a" style="left:2px;top:473.17px;width:342px;height:1px;background:#1c1c1c;"></div>
<div class="a" style="left:22px;top:463.6px;width:8px;height:8.57px;background:#1e1e1e;"></div>
<div class="a" style="left:31px;top:463.6px;width:8px;height:8.57px;background:#1e1e1e;"></div>
<svg class="a" style="left:3px;top:464.70000000000005px;" width="9" height="7" viewBox="0 0 9 7"><path d="M0.5 3.5 Q4.5 -1 8.5 3.5 Q4.5 8 0.5 3.5Z" fill="#c8c8c8"/><circle cx="4.5" cy="3.5" r="1.3" fill="#222"/></svg>
<svg class="a" style="left:45px;top:465.20000000000005px;" width="7" height="6" viewBox="0 0 7 6"><path d="M0.5 0.5 H6 L3.2 5.5Z" fill="#c8c8c8"/></svg>
<div class="a" style="left:53px;top:463.6px;width:9px;height:9px;background:#6b83e6;"></div>
<div class="a t" style="left:66px;top:462.90px;line-height:11.6px;font-size:7.6px;color:#9a9a9a;">1</div>
<svg class="a" style="left:85px;top:464.20000000000005px;" width="8" height="8" viewBox="0 0 8 8"><path d="M4 0.3 L5 2.9 L7.8 3 L5.7 4.8 L6.4 7.6 L4 6.1 L1.6 7.6 L2.3 4.8 L0.2 3 L3 2.9Z" fill="#c8c8c8"/></svg>
<div class="a t" style="left:96px;top:462.90px;line-height:11.6px;font-size:7.6px;color:#a9a9a9;">Button</div>
<div class="a" style="left:164px;top:463.1px;width:42px;height:9.57px;background:#1c1c1c;"></div>
<div class="a t" style="left:167px;top:463.00px;line-height:11.4px;font-size:7.4px;color:#c8c8c8;font-weight:bold;"><span style="font-size:8px;letter-spacing:0.6px;position:relative;top:0.6px;-webkit-text-stroke:0.2px">通常</span></div>
<svg class="a" style="left:198px;top:466.20000000000005px;" width="6" height="5" viewBox="0 0 6 5"><path d="M0.5 1 L3 3.5 L5.5 1" fill="none" stroke="#999" stroke-width="1"/></svg>
<div class="a" style="left:208px;top:463.1px;width:9px;height:9.57px;background:#1e1e1e;"></div>
<svg class="a" style="left:264px;top:464.20000000000005px;" width="8" height="8" viewBox="0 0 8 8"><circle cx="4" cy="4" r="3.2" fill="none" stroke="#aaa" stroke-width="0.9"/><path d="M2.5 4 Q4 2 5.5 4" fill="none" stroke="#aaa" stroke-width="0.8"/></svg>
<div class="a" style="left:278px;top:463.1px;width:52px;height:9.57px;background:#1c1c1c;"></div>
<div class="a t" style="left:281px;top:463.00px;line-height:11.4px;font-size:7.4px;color:#c8c8c8;font-weight:bold;"><span style="font-size:8px;letter-spacing:0.6px;position:relative;top:0.6px;-webkit-text-stroke:0.2px">なし</span></div>
<svg class="a" style="left:323px;top:466.20000000000005px;" width="6" height="5" viewBox="0 0 6 5"><path d="M0.5 1 L3 3.5 L5.5 1" fill="none" stroke="#999" stroke-width="1"/></svg>
<div class="a" style="left:344px;top:462.6px;width:664px;height:11.57px;background:#23242a;"></div>
<div class="a" style="left:348px;top:463.20000000000005px;width:660px;height:9.77px;background:#4b5894;"></div>
<div class="a" style="left:2px;top:474.17px;width:342px;height:11.57px;background:#212121;"></div>
<svg class="a" style="left:77px;top:475.77000000000004px;" width="7" height="8" viewBox="0 0 7 8"><circle cx="3.5" cy="4.5" r="2.7" fill="none" stroke="#bbb" stroke-width="1"/><path d="M3.5 0.5 V2" stroke="#bbb"/></svg>
<div class="a t" style="left:87px;top:474.57px;line-height:11.4px;font-size:7.4px;color:#a0a0a0;font-weight:bold;"><span style="font-size:8px;letter-spacing:0.6px;position:relative;top:0.6px;-webkit-text-stroke:0.2px">位置</span></div>
<div class="a t" style="left:165.5px;top:474.27px;line-height:12.0px;font-size:8.0px;color:#3f86d6;font-weight:bold;letter-spacing:0.35px;">1247.8,538.0</div>
<svg class="a" style="left:275px;top:475.77000000000004px;" width="8" height="8" viewBox="0 0 8 8"><circle cx="4" cy="4" r="3.2" fill="none" stroke="#aaa" stroke-width="0.9"/><path d="M2.5 4 Q4 2 5.5 4" fill="none" stroke="#aaa" stroke-width="0.8"/></svg>
<div class="a" style="left:344px;top:474.17px;width:664px;height:11.57px;background:#2d2d2d;"></div>
<div class="a" style="left:2px;top:485.74px;width:342px;height:10.57px;background:#3a3a3a;"></div>
<div class="a" style="left:2px;top:496.31px;width:342px;height:1px;background:#1c1c1c;"></div>
<div class="a" style="left:22px;top:486.74px;width:8px;height:8.57px;background:#333;"></div>
<div class="a" style="left:31px;top:486.74px;width:8px;height:8.57px;background:#333;"></div>
<svg class="a" style="left:46px;top:488.34000000000003px;" width="6" height="7" viewBox="0 0 6 7"><path d="M0.5 0.5 L5.5 3.5 L0.5 6.5Z" fill="#c8c8c8"/></svg>
<div class="a" style="left:53px;top:486.74px;width:9px;height:9px;background:#6b83e6;"></div>
<div class="a t" style="left:66px;top:486.04px;line-height:11.6px;font-size:7.6px;color:#9a9a9a;">2</div>
<svg class="a" style="left:85px;top:487.34000000000003px;" width="8" height="8" viewBox="0 0 8 8"><path d="M4 0.3 L5 2.9 L7.8 3 L5.7 4.8 L6.4 7.6 L4 6.1 L1.6 7.6 L2.3 4.8 L0.2 3 L3 2.9Z" fill="#c8c8c8"/></svg>
<div class="a" style="left:95px;top:486.74px;width:66px;height:9px;background:#a8a8a8;"></div>
<div class="a t" style="left:96px;top:486.34px;line-height:11.0px;font-size:7.0px;color:#3a3a3a;">Matte-ON</div>
<div class="a" style="left:164px;top:486.24px;width:42px;height:9.57px;background:#1c1c1c;"></div>
<div class="a t" style="left:167px;top:486.14px;line-height:11.4px;font-size:7.4px;color:#c8c8c8;font-weight:bold;"><span style="font-size:8px;letter-spacing:0.6px;position:relative;top:0.6px;-webkit-text-stroke:0.2px">通常</span></div>
<svg class="a" style="left:198px;top:489.34000000000003px;" width="6" height="5" viewBox="0 0 6 5"><path d="M0.5 1 L3 3.5 L5.5 1" fill="none" stroke="#999" stroke-width="1"/></svg>
<div class="a" style="left:208px;top:486.24px;width:9px;height:9.57px;background:#1e1e1e;"></div>
<div class="a" style="left:221px;top:486.24px;width:37px;height:9.57px;background:#1c1c1c;"></div>
<div class="a t" style="left:224px;top:486.14px;line-height:11.4px;font-size:7.4px;color:#c8c8c8;font-weight:bold;"><span style="font-size:8px;letter-spacing:0.6px;position:relative;top:0.6px;-webkit-text-stroke:0.2px">なし</span></div>
<svg class="a" style="left:252px;top:489.34000000000003px;" width="6" height="5" viewBox="0 0 6 5"><path d="M0.5 1 L3 3.5 L5.5 1" fill="none" stroke="#999" stroke-width="1"/></svg>
<svg class="a" style="left:264px;top:487.34000000000003px;" width="8" height="8" viewBox="0 0 8 8"><circle cx="4" cy="4" r="3.2" fill="none" stroke="#aaa" stroke-width="0.9"/><path d="M2.5 4 Q4 2 5.5 4" fill="none" stroke="#aaa" stroke-width="0.8"/></svg>
<div class="a" style="left:278px;top:486.24px;width:52px;height:9.57px;background:#1c1c1c;"></div>
<div class="a t" style="left:281px;top:486.14px;line-height:11.4px;font-size:7.4px;color:#c8c8c8;font-weight:bold;"><span style="font-size:8px;letter-spacing:0.6px;position:relative;top:0.6px;-webkit-text-stroke:0.2px">なし</span></div>
<svg class="a" style="left:323px;top:489.34000000000003px;" width="6" height="5" viewBox="0 0 6 5"><path d="M0.5 1 L3 3.5 L5.5 1" fill="none" stroke="#999" stroke-width="1"/></svg>
<div class="a" style="left:344px;top:485.74px;width:664px;height:11.57px;background:#23242a;"></div>
<div class="a" style="left:348px;top:486.34000000000003px;width:660px;height:9.77px;background:linear-gradient(#7a8ee8,#5a6ed6 40%,#5366c8);"></div>
<div class="a" style="left:2px;top:497.31px;width:342px;height:10.57px;background:#252525;"></div>
<div class="a" style="left:2px;top:507.88px;width:342px;height:1px;background:#1c1c1c;"></div>
<div class="a" style="left:22px;top:498.31px;width:8px;height:8.57px;background:#1e1e1e;"></div>
<div class="a" style="left:31px;top:498.31px;width:8px;height:8.57px;background:#1e1e1e;"></div>
<svg class="a" style="left:3px;top:499.41px;" width="9" height="7" viewBox="0 0 9 7"><path d="M0.5 3.5 Q4.5 -1 8.5 3.5 Q4.5 8 0.5 3.5Z" fill="#c8c8c8"/><circle cx="4.5" cy="3.5" r="1.3" fill="#222"/></svg>
<svg class="a" style="left:46px;top:499.91px;" width="6" height="7" viewBox="0 0 6 7"><path d="M0.5 0.5 L5.5 3.5 L0.5 6.5Z" fill="#c8c8c8"/></svg>
<div class="a" style="left:53px;top:498.31px;width:9px;height:9px;background:#c43539;"></div>
<div class="a t" style="left:66px;top:497.61px;line-height:11.6px;font-size:7.6px;color:#9a9a9a;">3</div>
<div class="a t" style="left:86px;top:497.71px;line-height:11.4px;font-size:7.4px;color:#c8c8c8;font-weight:bold;">T</div>
<div class="a t" style="left:96px;top:497.61px;line-height:11.6px;font-size:7.6px;color:#a9a9a9;">ON</div>
<div class="a" style="left:164px;top:497.81px;width:42px;height:9.57px;background:#1c1c1c;"></div>
<div class="a t" style="left:167px;top:497.71px;line-height:11.4px;font-size:7.4px;color:#c8c8c8;font-weight:bold;"><span style="font-size:8px;letter-spacing:0.6px;position:relative;top:0.6px;-webkit-text-stroke:0.2px">通常</span></div>
<svg class="a" style="left:198px;top:500.91px;" width="6" height="5" viewBox="0 0 6 5"><path d="M0.5 1 L3 3.5 L5.5 1" fill="none" stroke="#999" stroke-width="1"/></svg>
<div class="a" style="left:208px;top:497.81px;width:9px;height:9.57px;background:#1e1e1e;"></div>
<div class="a" style="left:221px;top:497.81px;width:37px;height:9.57px;background:#1c1c1c;"></div>
<div class="a t" style="left:224px;top:497.71px;line-height:11.4px;font-size:7.4px;color:#c8c8c8;font-weight:bold;"><span style="font-size:8px;letter-spacing:0.6px;position:relative;top:0.6px;-webkit-text-stroke:0.2px">なし</span></div>
<svg class="a" style="left:252px;top:500.91px;" width="6" height="5" viewBox="0 0 6 5"><path d="M0.5 1 L3 3.5 L5.5 1" fill="none" stroke="#999" stroke-width="1"/></svg>
<svg class="a" style="left:264px;top:498.91px;" width="8" height="8" viewBox="0 0 8 8"><circle cx="4" cy="4" r="3.2" fill="none" stroke="#aaa" stroke-width="0.9"/><path d="M2.5 4 Q4 2 5.5 4" fill="none" stroke="#aaa" stroke-width="0.8"/></svg>
<div class="a" style="left:278px;top:497.81px;width:52px;height:9.57px;background:#1c1c1c;"></div>
<div class="a t" style="left:280px;top:498.51px;line-height:9.8px;font-size:5.8px;color:#c8c8c8;font-weight:bold;">1. Button</div>
<svg class="a" style="left:323px;top:500.91px;" width="6" height="5" viewBox="0 0 6 5"><path d="M0.5 1 L3 3.5 L5.5 1" fill="none" stroke="#999" stroke-width="1"/></svg>
<div class="a" style="left:344px;top:497.31px;width:664px;height:11.57px;background:#23242a;"></div>
<div class="a" style="left:348px;top:497.91px;width:660px;height:9.77px;background:#7b3537;"></div>
<div class="a" style="left:2px;top:508.88px;width:342px;height:10.57px;background:#252525;"></div>
<div class="a" style="left:2px;top:519.45px;width:342px;height:1px;background:#1c1c1c;"></div>
<div class="a" style="left:22px;top:509.88px;width:8px;height:8.57px;background:#1e1e1e;"></div>
<div class="a" style="left:31px;top:509.88px;width:8px;height:8.57px;background:#1e1e1e;"></div>
<svg class="a" style="left:46px;top:511.48px;" width="6" height="7" viewBox="0 0 6 7"><path d="M0.5 0.5 L5.5 3.5 L0.5 6.5Z" fill="#c8c8c8"/></svg>
<div class="a" style="left:53px;top:509.88px;width:9px;height:9px;background:#6b83e6;"></div>
<div class="a t" style="left:66px;top:509.18px;line-height:11.6px;font-size:7.6px;color:#9a9a9a;">4</div>
<svg class="a" style="left:85px;top:510.48px;" width="8" height="8" viewBox="0 0 8 8"><path d="M4 0.3 L5 2.9 L7.8 3 L5.7 4.8 L6.4 7.6 L4 6.1 L1.6 7.6 L2.3 4.8 L0.2 3 L3 2.9Z" fill="#c8c8c8"/></svg>
<svg class="a" style="left:95px;top:509.98px;" width="9" height="9" viewBox="0 0 9 9"><rect x="0.5" y="0.5" width="8" height="8" fill="none" stroke="#aaa" stroke-width="1"/><rect x="3" y="3" width="3" height="3" fill="#ccc"/></svg>
<div class="a t" style="left:106px;top:509.48px;line-height:11.0px;font-size:7.0px;color:#a9a9a9;">Matte-Green</div>
<div class="a" style="left:164px;top:509.38px;width:42px;height:9.57px;background:#1c1c1c;"></div>
<div class="a t" style="left:167px;top:509.28px;line-height:11.4px;font-size:7.4px;color:#c8c8c8;font-weight:bold;"><span style="font-size:8px;letter-spacing:0.6px;position:relative;top:0.6px;-webkit-text-stroke:0.2px">通常</span></div>
<svg class="a" style="left:198px;top:512.48px;" width="6" height="5" viewBox="0 0 6 5"><path d="M0.5 1 L3 3.5 L5.5 1" fill="none" stroke="#999" stroke-width="1"/></svg>
<div class="a" style="left:208px;top:509.38px;width:9px;height:9.57px;background:#1e1e1e;"></div>
<div class="a" style="left:221px;top:509.38px;width:37px;height:9.57px;background:#1c1c1c;"></div>
<div class="a t" style="left:224px;top:509.28px;line-height:11.4px;font-size:7.4px;color:#c8c8c8;font-weight:bold;"><span style="font-size:8px;letter-spacing:0.6px;position:relative;top:0.6px;-webkit-text-stroke:0.2px">なし</span></div>
<svg class="a" style="left:252px;top:512.48px;" width="6" height="5" viewBox="0 0 6 5"><path d="M0.5 1 L3 3.5 L5.5 1" fill="none" stroke="#999" stroke-width="1"/></svg>
<svg class="a" style="left:264px;top:510.48px;" width="8" height="8" viewBox="0 0 8 8"><circle cx="4" cy="4" r="3.2" fill="none" stroke="#aaa" stroke-width="0.9"/><path d="M2.5 4 Q4 2 5.5 4" fill="none" stroke="#aaa" stroke-width="0.8"/></svg>
<div class="a" style="left:278px;top:509.38px;width:52px;height:9.57px;background:#1c1c1c;"></div>
<div class="a t" style="left:281px;top:509.28px;line-height:11.4px;font-size:7.4px;color:#c8c8c8;font-weight:bold;"><span style="font-size:8px;letter-spacing:0.6px;position:relative;top:0.6px;-webkit-text-stroke:0.2px">なし</span></div>
<svg class="a" style="left:323px;top:512.48px;" width="6" height="5" viewBox="0 0 6 5"><path d="M0.5 1 L3 3.5 L5.5 1" fill="none" stroke="#999" stroke-width="1"/></svg>
<div class="a" style="left:344px;top:508.88px;width:664px;height:11.57px;background:#23242a;"></div>
<div class="a" style="left:348px;top:509.48px;width:660px;height:9.77px;background:#4b5894;"></div>
<div class="a" style="left:2px;top:520.45px;width:342px;height:10.57px;background:#252525;"></div>
<div class="a" style="left:2px;top:531.0200000000001px;width:342px;height:1px;background:#1c1c1c;"></div>
<div class="a" style="left:22px;top:521.45px;width:8px;height:8.57px;background:#1e1e1e;"></div>
<div class="a" style="left:31px;top:521.45px;width:8px;height:8.57px;background:#1e1e1e;"></div>
<svg class="a" style="left:3px;top:522.5500000000001px;" width="9" height="7" viewBox="0 0 9 7"><path d="M0.5 3.5 Q4.5 -1 8.5 3.5 Q4.5 8 0.5 3.5Z" fill="#c8c8c8"/><circle cx="4.5" cy="3.5" r="1.3" fill="#222"/></svg>
<svg class="a" style="left:46px;top:523.0500000000001px;" width="6" height="7" viewBox="0 0 6 7"><path d="M0.5 0.5 L5.5 3.5 L0.5 6.5Z" fill="#c8c8c8"/></svg>
<div class="a" style="left:53px;top:521.45px;width:9px;height:9px;background:#6b83e6;"></div>
<div class="a t" style="left:66px;top:520.75px;line-height:11.6px;font-size:7.6px;color:#9a9a9a;">5</div>
<svg class="a" style="left:85px;top:522.0500000000001px;" width="8" height="8" viewBox="0 0 8 8"><path d="M4 0.3 L5 2.9 L7.8 3 L5.7 4.8 L6.4 7.6 L4 6.1 L1.6 7.6 L2.3 4.8 L0.2 3 L3 2.9Z" fill="#c8c8c8"/></svg>
<svg class="a" style="left:95px;top:521.5500000000001px;" width="9" height="9" viewBox="0 0 9 9"><rect x="0.5" y="0.5" width="8" height="8" fill="none" stroke="#aaa" stroke-width="1"/><path d="M2.5 2.5 V6.5 H6.5" stroke="#999" fill="none"/></svg>
<div class="a t" style="left:106px;top:521.05px;line-height:11.0px;font-size:7.0px;color:#a9a9a9;">BG-Green</div>
<div class="a" style="left:164px;top:520.95px;width:42px;height:9.57px;background:#1c1c1c;"></div>
<div class="a t" style="left:167px;top:520.85px;line-height:11.4px;font-size:7.4px;color:#c8c8c8;font-weight:bold;"><span style="font-size:8px;letter-spacing:0.6px;position:relative;top:0.6px;-webkit-text-stroke:0.2px">通常</span></div>
<svg class="a" style="left:198px;top:524.0500000000001px;" width="6" height="5" viewBox="0 0 6 5"><path d="M0.5 1 L3 3.5 L5.5 1" fill="none" stroke="#999" stroke-width="1"/></svg>
<div class="a" style="left:208px;top:520.95px;width:9px;height:9.57px;background:#1e1e1e;"></div>
<div class="a" style="left:221px;top:520.95px;width:37px;height:9.57px;background:#1c1c1c;"></div>
<div class="a t" style="left:224px;top:520.85px;line-height:11.4px;font-size:7.4px;color:#c8c8c8;font-weight:bold;"><span style="font-size:8px;letter-spacing:0.6px;position:relative;top:0.6px;-webkit-text-stroke:0.2px">アルファ</span></div>
<svg class="a" style="left:252px;top:524.0500000000001px;" width="6" height="5" viewBox="0 0 6 5"><path d="M0.5 1 L3 3.5 L5.5 1" fill="none" stroke="#999" stroke-width="1"/></svg>
<svg class="a" style="left:264px;top:522.0500000000001px;" width="8" height="8" viewBox="0 0 8 8"><circle cx="4" cy="4" r="3.2" fill="none" stroke="#aaa" stroke-width="0.9"/><path d="M2.5 4 Q4 2 5.5 4" fill="none" stroke="#aaa" stroke-width="0.8"/></svg>
<div class="a" style="left:278px;top:520.95px;width:52px;height:9.57px;background:#1c1c1c;"></div>
<div class="a t" style="left:280px;top:521.65px;line-height:9.8px;font-size:5.8px;color:#c8c8c8;font-weight:bold;">1. Button</div>
<svg class="a" style="left:323px;top:524.0500000000001px;" width="6" height="5" viewBox="0 0 6 5"><path d="M0.5 1 L3 3.5 L5.5 1" fill="none" stroke="#999" stroke-width="1"/></svg>
<div class="a" style="left:344px;top:520.45px;width:664px;height:11.57px;background:#23242a;"></div>
<div class="a" style="left:348px;top:521.0500000000001px;width:660px;height:9.77px;background:#4b5894;"></div>
<div class="a" style="left:2px;top:532.02px;width:342px;height:10.57px;background:#252525;"></div>
<div class="a" style="left:2px;top:542.59px;width:342px;height:1px;background:#1c1c1c;"></div>
<div class="a" style="left:22px;top:533.02px;width:8px;height:8.57px;background:#1e1e1e;"></div>
<div class="a" style="left:31px;top:533.02px;width:8px;height:8.57px;background:#1e1e1e;"></div>
<svg class="a" style="left:3px;top:534.12px;" width="9" height="7" viewBox="0 0 9 7"><path d="M0.5 3.5 Q4.5 -1 8.5 3.5 Q4.5 8 0.5 3.5Z" fill="#c8c8c8"/><circle cx="4.5" cy="3.5" r="1.3" fill="#222"/></svg>
<svg class="a" style="left:46px;top:534.62px;" width="6" height="7" viewBox="0 0 6 7"><path d="M0.5 0.5 L5.5 3.5 L0.5 6.5Z" fill="#c8c8c8"/></svg>
<div class="a" style="left:53px;top:533.02px;width:9px;height:9px;background:#6b83e6;"></div>
<div class="a t" style="left:66px;top:532.32px;line-height:11.6px;font-size:7.6px;color:#9a9a9a;">6</div>
<svg class="a" style="left:85px;top:533.62px;" width="8" height="8" viewBox="0 0 8 8"><path d="M4 0.3 L5 2.9 L7.8 3 L5.7 4.8 L6.4 7.6 L4 6.1 L1.6 7.6 L2.3 4.8 L0.2 3 L3 2.9Z" fill="#c8c8c8"/></svg>
<div class="a t" style="left:96px;top:532.62px;line-height:11.0px;font-size:7.0px;color:#a9a9a9;">BG</div>
<div class="a" style="left:164px;top:532.52px;width:42px;height:9.57px;background:#1c1c1c;"></div>
<div class="a t" style="left:167px;top:532.42px;line-height:11.4px;font-size:7.4px;color:#c8c8c8;font-weight:bold;"><span style="font-size:8px;letter-spacing:0.6px;position:relative;top:0.6px;-webkit-text-stroke:0.2px">通常</span></div>
<svg class="a" style="left:198px;top:535.62px;" width="6" height="5" viewBox="0 0 6 5"><path d="M0.5 1 L3 3.5 L5.5 1" fill="none" stroke="#999" stroke-width="1"/></svg>
<div class="a" style="left:208px;top:532.52px;width:9px;height:9.57px;background:#1e1e1e;"></div>
<div class="a" style="left:221px;top:532.52px;width:37px;height:9.57px;background:#1c1c1c;"></div>
<div class="a t" style="left:224px;top:532.42px;line-height:11.4px;font-size:7.4px;color:#c8c8c8;font-weight:bold;"><span style="font-size:8px;letter-spacing:0.6px;position:relative;top:0.6px;-webkit-text-stroke:0.2px">なし</span></div>
<svg class="a" style="left:252px;top:535.62px;" width="6" height="5" viewBox="0 0 6 5"><path d="M0.5 1 L3 3.5 L5.5 1" fill="none" stroke="#999" stroke-width="1"/></svg>
<svg class="a" style="left:264px;top:533.62px;" width="8" height="8" viewBox="0 0 8 8"><circle cx="4" cy="4" r="3.2" fill="none" stroke="#aaa" stroke-width="0.9"/><path d="M2.5 4 Q4 2 5.5 4" fill="none" stroke="#aaa" stroke-width="0.8"/></svg>
<div class="a" style="left:278px;top:532.52px;width:52px;height:9.57px;background:#1c1c1c;"></div>
<div class="a t" style="left:281px;top:532.42px;line-height:11.4px;font-size:7.4px;color:#c8c8c8;font-weight:bold;"><span style="font-size:8px;letter-spacing:0.6px;position:relative;top:0.6px;-webkit-text-stroke:0.2px">なし</span></div>
<svg class="a" style="left:323px;top:535.62px;" width="6" height="5" viewBox="0 0 6 5"><path d="M0.5 1 L3 3.5 L5.5 1" fill="none" stroke="#999" stroke-width="1"/></svg>
<div class="a" style="left:344px;top:532.02px;width:664px;height:11.57px;background:#23242a;"></div>
<div class="a" style="left:348px;top:532.62px;width:660px;height:9.77px;background:#4b5894;"></div>
<div class="a" style="left:2px;top:543.59px;width:342px;height:10.57px;background:#252525;"></div>
<div class="a" style="left:2px;top:554.1600000000001px;width:342px;height:1px;background:#1c1c1c;"></div>
<div class="a" style="left:22px;top:544.59px;width:8px;height:8.57px;background:#1e1e1e;"></div>
<div class="a" style="left:31px;top:544.59px;width:8px;height:8.57px;background:#1e1e1e;"></div>
<svg class="a" style="left:3px;top:545.69px;" width="9" height="7" viewBox="0 0 9 7"><path d="M0.5 3.5 Q4.5 -1 8.5 3.5 Q4.5 8 0.5 3.5Z" fill="#c8c8c8"/><circle cx="4.5" cy="3.5" r="1.3" fill="#222"/></svg>
<svg class="a" style="left:31px;top:544.69px;" width="8" height="9" viewBox="0 0 8 9"><path d="M2 4 V2.5 A2 2 0 0 1 6 2.5 V4" fill="none" stroke="#c8c8c8" stroke-width="1.1"/><rect x="0.5" y="4" width="7" height="4.5" fill="#c8c8c8"/></svg>
<svg class="a" style="left:46px;top:546.19px;" width="6" height="7" viewBox="0 0 6 7"><path d="M0.5 0.5 L5.5 3.5 L0.5 6.5Z" fill="#c8c8c8"/></svg>
<div class="a" style="left:53px;top:544.59px;width:9px;height:9px;background:#c43539;"></div>
<div class="a t" style="left:66px;top:543.89px;line-height:11.6px;font-size:7.6px;color:#9a9a9a;">7</div>
<div class="a" style="left:84px;top:545.09px;width:9px;height:9px;background:#f4f4f4;"></div>
<div class="a t" style="left:96px;top:543.89px;line-height:11.6px;font-size:7.6px;color:#a9a9a9;">[<span style="font-size:8px;letter-spacing:0.6px;position:relative;top:0.6px;-webkit-text-stroke:0.2px">ホワイト</span> <span style="font-size:8px;letter-spacing:0.6px;position:relative;top:0.6px;-webkit-text-stroke:0.2px">平面</span> 2]</div>
<div class="a" style="left:164px;top:544.09px;width:42px;height:9.57px;background:#1c1c1c;"></div>
<div class="a t" style="left:167px;top:543.99px;line-height:11.4px;font-size:7.4px;color:#c8c8c8;font-weight:bold;"><span style="font-size:8px;letter-spacing:0.6px;position:relative;top:0.6px;-webkit-text-stroke:0.2px">通常</span></div>
<svg class="a" style="left:198px;top:547.19px;" width="6" height="5" viewBox="0 0 6 5"><path d="M0.5 1 L3 3.5 L5.5 1" fill="none" stroke="#999" stroke-width="1"/></svg>
<div class="a" style="left:208px;top:544.09px;width:9px;height:9.57px;background:#1e1e1e;"></div>
<div class="a" style="left:221px;top:544.09px;width:37px;height:9.57px;background:#1c1c1c;"></div>
<div class="a t" style="left:224px;top:543.99px;line-height:11.4px;font-size:7.4px;color:#c8c8c8;font-weight:bold;"><span style="font-size:8px;letter-spacing:0.6px;position:relative;top:0.6px;-webkit-text-stroke:0.2px">なし</span></div>
<svg class="a" style="left:252px;top:547.19px;" width="6" height="5" viewBox="0 0 6 5"><path d="M0.5 1 L3 3.5 L5.5 1" fill="none" stroke="#999" stroke-width="1"/></svg>
<svg class="a" style="left:264px;top:545.19px;" width="8" height="8" viewBox="0 0 8 8"><circle cx="4" cy="4" r="3.2" fill="none" stroke="#aaa" stroke-width="0.9"/><path d="M2.5 4 Q4 2 5.5 4" fill="none" stroke="#aaa" stroke-width="0.8"/></svg>
<div class="a" style="left:278px;top:544.09px;width:52px;height:9.57px;background:#1c1c1c;"></div>
<div class="a t" style="left:281px;top:543.99px;line-height:11.4px;font-size:7.4px;color:#c8c8c8;font-weight:bold;"><span style="font-size:8px;letter-spacing:0.6px;position:relative;top:0.6px;-webkit-text-stroke:0.2px">なし</span></div>
<svg class="a" style="left:323px;top:547.19px;" width="6" height="5" viewBox="0 0 6 5"><path d="M0.5 1 L3 3.5 L5.5 1" fill="none" stroke="#999" stroke-width="1"/></svg>
<div class="a" style="left:344px;top:543.59px;width:664px;height:11.57px;background:#23242a;"></div>
<div class="a" style="left:348px;top:544.19px;width:660px;height:9.77px;background:#7b3537;"></div>
<div class="a" style="left:338px;top:451px;width:6px;height:162px;background:#202020;"></div>
<div class="a" style="left:344px;top:555.1600000000001px;width:664px;height:57.83999999999992px;background:#2e2e2e;"></div>
<div class="a" style="left:1008px;top:428px;width:13px;height:185px;background:#1f1f1f;"></div>
<div class="a" style="left:344px;top:428px;width:664px;height:23px;background:#232323;"></div>
<div class="a" style="left:344px;top:433px;width:664px;height:4.5px;background:#6b6b6b;"></div>
<svg class="a" style="left:343px;top:432px;" width="7" height="7" viewBox="0 0 7 7"><circle cx="3.5" cy="3.3" r="2.6" fill="#4a8ad8"/></svg>
<svg class="a" style="left:1006px;top:432px;" width="7" height="7" viewBox="0 0 7 7"><circle cx="3.5" cy="3.3" r="2.6" fill="#4a8ad8"/></svg>
<div class="a t" style="left:351px;top:437.30px;line-height:11.8px;font-size:7.8px;color:#a8a8a8;">0f</div>
<div class="a t" style="left:360.53px;width:40px;text-align:center;top:437.90px;line-height:10.6px;font-size:7.8px;color:#a8a8a8">00:12f</div>
<div class="a" style="left:381px;top:447px;width:1px;height:3px;background:#8a8a8a;"></div>
<div class="a t" style="left:393.56px;width:40px;text-align:center;top:437.90px;line-height:10.6px;font-size:7.8px;color:#a8a8a8">01:00f</div>
<div class="a" style="left:414px;top:447px;width:1px;height:3px;background:#8a8a8a;"></div>
<div class="a t" style="left:426.59px;width:40px;text-align:center;top:437.90px;line-height:10.6px;font-size:7.8px;color:#a8a8a8">01:12f</div>
<div class="a" style="left:447px;top:447px;width:1px;height:3px;background:#8a8a8a;"></div>
<div class="a t" style="left:459.62px;width:40px;text-align:center;top:437.90px;line-height:10.6px;font-size:7.8px;color:#a8a8a8">02:00f</div>
<div class="a" style="left:480px;top:447px;width:1px;height:3px;background:#8a8a8a;"></div>
<div class="a t" style="left:492.65px;width:40px;text-align:center;top:437.90px;line-height:10.6px;font-size:7.8px;color:#a8a8a8">02:12f</div>
<div class="a" style="left:513px;top:447px;width:1px;height:3px;background:#8a8a8a;"></div>
<div class="a t" style="left:525.68px;width:40px;text-align:center;top:437.90px;line-height:10.6px;font-size:7.8px;color:#a8a8a8">03:00f</div>
<div class="a" style="left:546px;top:447px;width:1px;height:3px;background:#8a8a8a;"></div>
<div class="a t" style="left:558.71px;width:40px;text-align:center;top:437.90px;line-height:10.6px;font-size:7.8px;color:#a8a8a8">03:12f</div>
<div class="a" style="left:579px;top:447px;width:1px;height:3px;background:#8a8a8a;"></div>
<div class="a t" style="left:591.74px;width:40px;text-align:center;top:437.90px;line-height:10.6px;font-size:7.8px;color:#a8a8a8">04:00f</div>
<div class="a" style="left:612px;top:447px;width:1px;height:3px;background:#8a8a8a;"></div>
<div class="a t" style="left:624.77px;width:40px;text-align:center;top:437.90px;line-height:10.6px;font-size:7.8px;color:#a8a8a8">04:12f</div>
<div class="a" style="left:645px;top:447px;width:1px;height:3px;background:#8a8a8a;"></div>
<div class="a t" style="left:657.80px;width:40px;text-align:center;top:437.90px;line-height:10.6px;font-size:7.8px;color:#a8a8a8">05:00f</div>
<div class="a" style="left:678px;top:447px;width:1px;height:3px;background:#8a8a8a;"></div>
<div class="a t" style="left:690.83px;width:40px;text-align:center;top:437.90px;line-height:10.6px;font-size:7.8px;color:#a8a8a8">05:12f</div>
<div class="a" style="left:711px;top:447px;width:1px;height:3px;background:#8a8a8a;"></div>
<div class="a t" style="left:723.86px;width:40px;text-align:center;top:437.90px;line-height:10.6px;font-size:7.8px;color:#a8a8a8">06:00f</div>
<div class="a" style="left:744px;top:447px;width:1px;height:3px;background:#8a8a8a;"></div>
<div class="a t" style="left:756.89px;width:40px;text-align:center;top:437.90px;line-height:10.6px;font-size:7.8px;color:#a8a8a8">06:12f</div>
<div class="a" style="left:777px;top:447px;width:1px;height:3px;background:#8a8a8a;"></div>
<div class="a t" style="left:789.92px;width:40px;text-align:center;top:437.90px;line-height:10.6px;font-size:7.8px;color:#a8a8a8">07:00f</div>
<div class="a" style="left:810px;top:447px;width:1px;height:3px;background:#8a8a8a;"></div>
<div class="a t" style="left:822.95px;width:40px;text-align:center;top:437.90px;line-height:10.6px;font-size:7.8px;color:#a8a8a8">07:12f</div>
<div class="a" style="left:843px;top:447px;width:1px;height:3px;background:#8a8a8a;"></div>
<div class="a t" style="left:855.98px;width:40px;text-align:center;top:437.90px;line-height:10.6px;font-size:7.8px;color:#a8a8a8">08:00f</div>
<div class="a" style="left:876px;top:447px;width:1px;height:3px;background:#8a8a8a;"></div>
<div class="a t" style="left:889.01px;width:40px;text-align:center;top:437.90px;line-height:10.6px;font-size:7.8px;color:#a8a8a8">08:12f</div>
<div class="a" style="left:909px;top:447px;width:1px;height:3px;background:#8a8a8a;"></div>
<div class="a t" style="left:922.04px;width:40px;text-align:center;top:437.90px;line-height:10.6px;font-size:7.8px;color:#a8a8a8">09:00f</div>
<div class="a" style="left:942px;top:447px;width:1px;height:3px;background:#8a8a8a;"></div>
<div class="a t" style="left:955.07px;width:40px;text-align:center;top:437.90px;line-height:10.6px;font-size:7.8px;color:#a8a8a8">09:12f</div>
<div class="a" style="left:975px;top:447px;width:1px;height:3px;background:#8a8a8a;"></div>
<div class="a t" style="left:998.1px;top:437.30px;line-height:11.8px;font-size:7.8px;color:#a8a8a8;">10:0</div>
<div class="a" style="left:344px;top:450px;width:664px;height:9.5px;background:#5e5e5e;"></div>
<div class="a" style="left:344px;top:459.5px;width:664px;height:2.5px;background:#2db844;"></div>
<div class="a" style="left:344px;top:462px;width:664px;height:0.6px;background:#1e1e1e;"></div>
<svg class="a" style="left:344px;top:449px;" width="5" height="11" viewBox="0 0 5 11"><rect x="0.5" y="0.5" width="4" height="10" rx="2" fill="#4a8ad8"/></svg>
<svg class="a" style="left:1007px;top:449px;" width="5" height="11" viewBox="0 0 5 11"><rect x="0.5" y="0.5" width="4" height="10" rx="2" fill="#4a8ad8"/></svg>
<div class="a" style="left:344px;top:462px;width:4px;height:151px;background:#1b2130;"></div>
<div class="a" style="left:348px;top:448px;width:1px;height:165px;background:#8d9db8;"></div>
<svg class="a" style="left:344.5px;top:439.5px;" width="8" height="9" viewBox="0 0 8 9"><path d="M0.3 1.5 Q0.3 0.3 1.5 0.3 H6.5 Q7.7 0.3 7.7 1.5 V4.5 L4 8.7 L0.3 4.5Z" fill="#4a8ad8"/></svg>
<div class="a t" style="left:346.5px;top:473.42px;line-height:13.5px;font-size:9.5px;color:#c8c8c8;font-weight:bold;font-family:'Liberation Serif',serif;">I</div>
<svg class="a" style="left:1014px;top:451px;" width="8" height="10" viewBox="0 0 8 10"><path d="M0.5 0.5 H7.5 V6 L4 9.5 L0.5 6Z" fill="#d0d0d0"/></svg>
<svg class="a" style="left:1013px;top:464px;" width="9" height="8" viewBox="0 0 9 8"><path d="M0.5 4 L4 0.5 V2.5 H8.5 V5.5 H4 V7.5Z" fill="#bbb"/></svg>
<div class="a" style="left:2px;top:613px;width:1019px;height:10px;background:#1d1d1d;"></div>
<svg class="a" style="left:4px;top:615px;" width="9" height="9" viewBox="0 0 9 9"><circle cx="3.5" cy="3.5" r="3" fill="#aaa"/><rect x="3.5" y="3.5" width="5" height="5" fill="#888"/></svg>
<svg class="a" style="left:15px;top:614px;" width="9" height="10" viewBox="0 0 9 10"><circle cx="4" cy="4" r="3" fill="none" stroke="#4a80d0" stroke-width="1.2"/><rect x="4" y="4" width="4.5" height="4.5" fill="none" stroke="#4a80d0" stroke-width="1.1"/></svg>
<svg class="a" style="left:27px;top:614px;" width="7" height="9" viewBox="0 0 7 9"><path d="M1 1 H6 M1 8 H6 M3.5 1 V8 M1 4.5 H6" stroke="#aaa" stroke-width="1.2"/></svg>
<div class="a" style="left:163px;top:613px;width:98px;height:10px;background:#181818;"></div>
<div class="a t" style="left:186px;top:613.50px;line-height:11px;font-size:7px;color:#b0b0b0;font-weight:bold;"><span style="font-size:8px;letter-spacing:0.6px;position:relative;top:0.6px;-webkit-text-stroke:0.2px">スイッチ</span> / <span style="font-size:8px;letter-spacing:0.6px;position:relative;top:0.6px;-webkit-text-stroke:0.2px">モード</span></div>
<svg class="a" style="left:347px;top:616px;" width="7" height="5" viewBox="0 0 7 5"><path d="M0.5 4.5 L3.5 1 L6.5 4.5Z" fill="#bbb"/></svg>
<svg class="a" style="left:360px;top:615px;" width="8" height="8" viewBox="0 0 8 8"><circle cx="4" cy="4" r="2.7" fill="none" stroke="#bbb" stroke-width="1.1"/></svg>
<div class="a" style="left:367px;top:618.5px;width:23px;height:1px;background:#555;"></div>
<svg class="a" style="left:395px;top:615px;" width="11" height="6" viewBox="0 0 11 6"><path d="M0.5 5.5 L3 1.5 L5.5 4 L7.5 1 L10.5 5.5Z" fill="#bbb"/></svg>
<svg class="a" style="left:70px;top:478px;" width="170" height="45" viewBox="0 0 170 45">
<rect x="9.8" y="5.8" width="88" height="14.5" fill="none" stroke="#ef3a1c" stroke-width="3.2"/>
<path d="M118 13 Q150 14 150 24 Q151 34 96 36.5" fill="none" stroke="#ef3a1c" stroke-width="3.6" stroke-linecap="round"/>
<path d="M105 13 L125 5 L121 13.5 L125 22 Z" fill="#ef3a1c"/>
</svg>
<svg class="a" style="left:277px;top:509px;" width="9" height="12" viewBox="0 0 9 12"><path d="M1 1 L1 10 L3.3 7.8 L5 11 L6.5 10.3 L5 7.2 L8 7.2 Z" fill="#eee" stroke="#111" stroke-width="0.7"/></svg>
</body></html>
